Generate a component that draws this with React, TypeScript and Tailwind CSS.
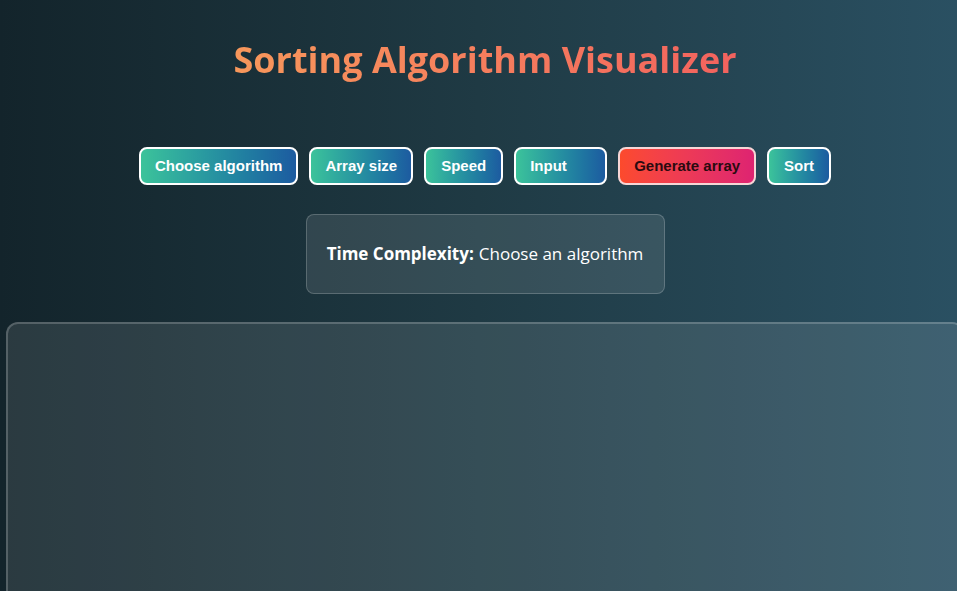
const buttons = [
  { label: 'Choose algorithm', cls: 'px-[14px]' },
  { label: 'Array size', cls: 'px-[14px]' },
  { label: 'Speed', cls: 'px-[15px]' },
  { label: 'Input', cls: 'w-[93px] pl-[14px] text-left' },
];

const tealBtn =
  'h-[38px] rounded-lg border-2 border-white bg-gradient-to-r from-[#3cc39a] to-[#1d5ba0] text-[15px] font-bold text-white';

export default function App() {
  return (
    <div className="h-[591px] w-[957px] overflow-hidden bg-gradient-to-r from-[#13242b] via-[#1f3a44] to-[#2a5062]">
      <div className="flex w-[970px] flex-col items-center" style={{ fontFamily: '"Open Sans", sans-serif' }}>
        {/* Title */}
        <h1 className="mt-[34px] bg-gradient-to-r from-[#f7975b] to-[#f2625e] bg-clip-text text-[36px] font-bold leading-[52px] text-transparent">
          Sorting Algorithm Visualizer
        </h1>

        {/* Controls */}
        <div
          className="mt-[61px] flex items-center gap-[11px]"
          style={{ fontFamily: '"Liberation Sans", Arial, sans-serif' }}
        >
          {buttons.map((b) => (
            <button key={b.label} className={`${tealBtn} ${b.cls}`}>
              {b.label}
            </button>
          ))}
          <button className="h-[38px] rounded-lg border-2 border-[#f6d6d6] bg-gradient-to-r from-[#fc4a2c] to-[#de2371] px-[14px] text-[15px] font-bold text-[#2a0b10]">
            Generate array
          </button>
          <button className={`${tealBtn} px-[15px]`}>Sort</button>
        </div>

        {/* Time complexity */}
        <div className="mt-[29px] flex h-[80px] w-[359px] items-center justify-center rounded-lg border border-white/20 bg-white/10 text-[17px] text-white">
          <span className="font-bold">Time Complexity:</span>
          <span className="ml-[5px]">Choose an algorithm</span>
        </div>

        {/* Visualizer panel */}
        <div className="mt-[28px] ml-[6px] h-[400px] w-[958px] self-start rounded-xl border-2 border-white/20 bg-white/10" />
      </div>
    </div>
  );
}
